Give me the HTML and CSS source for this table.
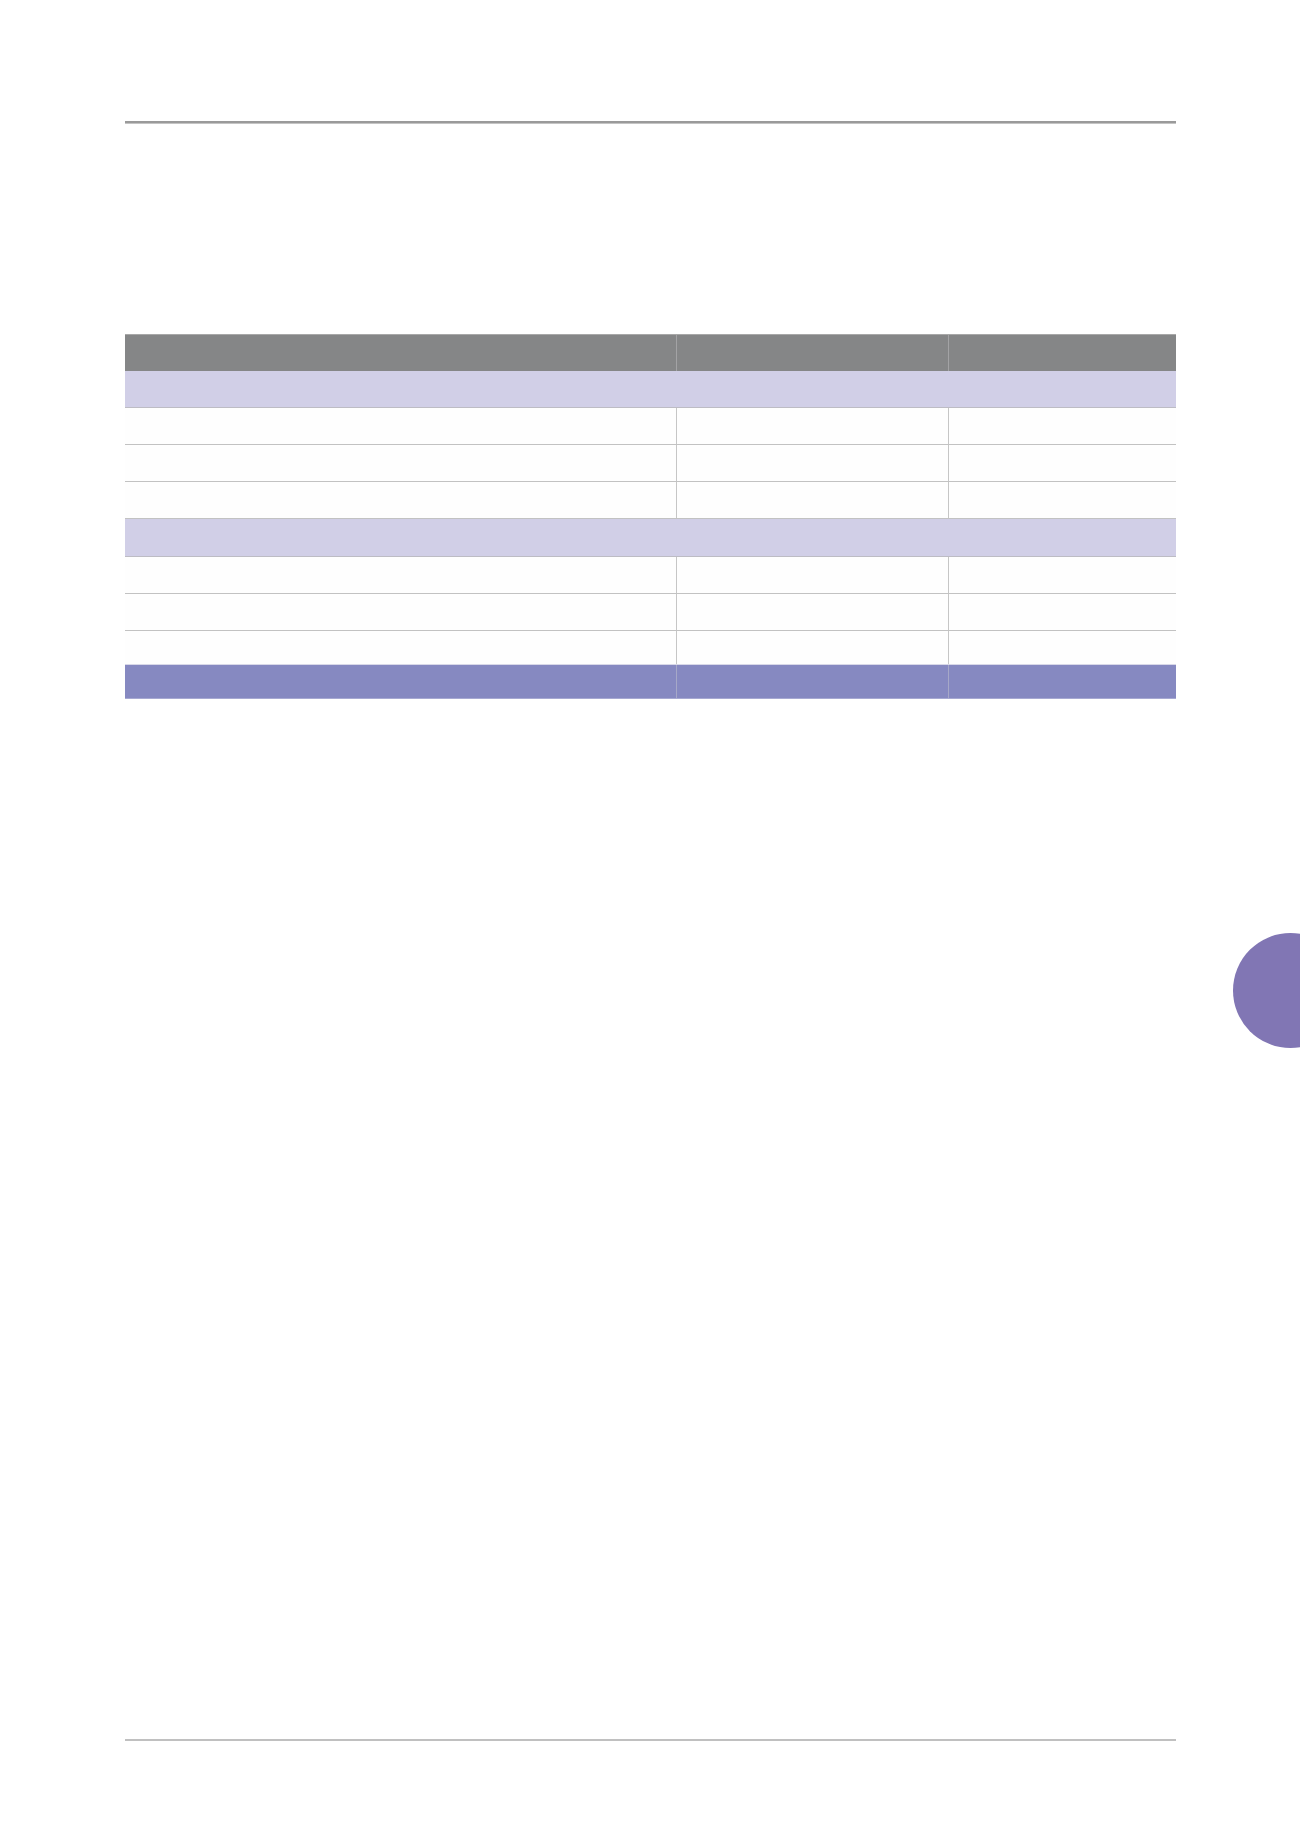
FILE: index.html
```html
<!DOCTYPE html>
<html lang="en">
<head>
<meta charset="utf-8">
<title>Page</title>
<link rel="stylesheet" href="styles.css">
</head>
<body>
<div class="page">
  <div class="rule-top"></div>
  <table class="data">
    <colgroup>
      <col class="c1"><col class="c2"><col class="c3">
    </colgroup>
    <thead>
      <tr class="head"><th></th><th></th><th></th></tr>
    </thead>
    <tbody>
      <tr class="section"><td colspan="3"></td></tr>
      <tr class="row"><td></td><td></td><td></td></tr>
      <tr class="row"><td></td><td></td><td></td></tr>
      <tr class="row"><td></td><td></td><td></td></tr>
      <tr class="section tall"><td colspan="3"></td></tr>
      <tr class="row"><td></td><td></td><td></td></tr>
      <tr class="row"><td></td><td></td><td></td></tr>
      <tr class="row short"><td></td><td></td><td></td></tr>
      <tr class="total"><td></td><td></td><td></td></tr>
    </tbody>
  </table>
  <div class="spacer"></div>
  <div class="rule-bottom"></div>
</div>
<div class="tab-dot"></div>
</body>
</html>
```
FILE: styles.css
```css
html, body {
  margin: 0;
  padding: 0;
  background: #ffffff;
  font-family: "Liberation Sans", Arial, sans-serif;
}
body {
  width: 1300px;
  height: 1839px;
  position: relative;
  overflow: hidden;
}
.page {
  width: 1051px;
  margin-left: 125px;
  padding-top: 121px;
  display: flex;
  flex-direction: column;
}
.rule-top {
  height: 2px;
  background: #9a9a9a;
  border-bottom: 1px solid #c4c4c4;
}
.data {
  margin-top: 210px;
  width: 1051px;
  border-collapse: collapse;
  table-layout: fixed;
}
.c1 { width: 551px; }
.c2 { width: 272px; }
.c3 { width: 228px; }
.data th, .data td {
  padding: 0;
}
.head th {
  height: 36px;
  background: #858687;
  border-top: 1px solid #a8a8a8;
  border-left: 1px solid #a3a3a5;
}
.head th:first-child { border-left: none; }
.section td {
  height: 36px;
  background: #d1cfe7;
  border-bottom: 1px solid #bdbcc4;
}
.section.tall td {
  height: 37px;
}
.row td {
  height: 36px;
  background: #fefefe;
  border-bottom: 1px solid #c2c2c2;
  border-left: 1px solid #c6c6c6;
}
.row td:first-child { border-left: none; }
.row.short td {
  height: 33px;
  border-bottom: 1px solid #d8d8e8;
}
.total td {
  height: 33px;
  background: #8689c1;
  border-left: 1px solid #a6a8c8;
  border-bottom: 1px solid #a7a9d2;
}
.total td:first-child { border-left: none; }
.spacer {
  height: 1040px;
}
.rule-bottom {
  height: 2px;
  background: #c0c0c0;
}
.tab-dot {
  position: absolute;
  left: 1233px;
  top: 933px;
  width: 115px;
  height: 115px;
  border-radius: 50%;
  background: #8176b4;
}
```
